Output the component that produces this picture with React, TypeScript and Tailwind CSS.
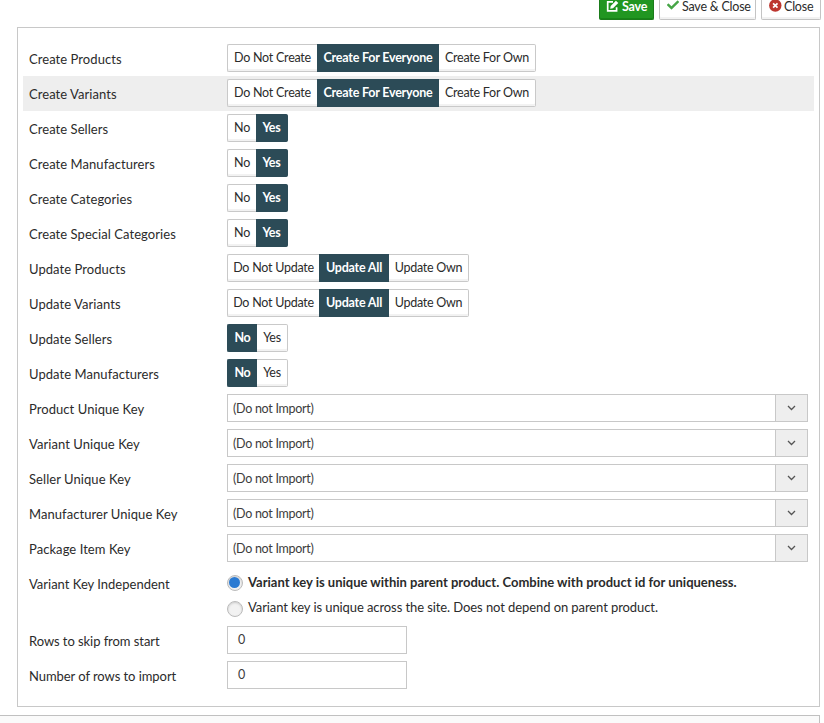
import React from "react";
import { FaCheck } from "react-icons/fa";

type Option = { label: string; width: string };

const createOptions: Option[] = [
  { label: "Do Not Create", width: "w-[90px]" },
  { label: "Create For Everyone", width: "w-[122px]" },
  { label: "Create For Own", width: "w-[97px]" },
];
const updateOptions: Option[] = [
  { label: "Do Not Update", width: "w-[92px]" },
  { label: "Update All", width: "w-[70px]" },
  { label: "Update Own", width: "w-[80px]" },
];
const yesActive: Option[] = [
  { label: "No", width: "w-[29px]" },
  { label: "Yes", width: "w-[32px]" },
];
const noActive: Option[] = [
  { label: "No", width: "w-[30px]" },
  { label: "Yes", width: "w-[31px]" },
];

const toggles = [
  { label: "Create Products", options: createOptions, active: 1 },
  { label: "Create Variants", options: createOptions, active: 1, hover: true },
  { label: "Create Sellers", options: yesActive, active: 1 },
  { label: "Create Manufacturers", options: yesActive, active: 1 },
  { label: "Create Categories", options: yesActive, active: 1 },
  { label: "Create Special Categories", options: yesActive, active: 1 },
  { label: "Update Products", options: updateOptions, active: 1 },
  { label: "Update Variants", options: updateOptions, active: 1 },
  { label: "Update Sellers", options: noActive, active: 0 },
  { label: "Update Manufacturers", options: noActive, active: 0 },
];

const keys = [
  "Product Unique Key",
  "Variant Unique Key",
  "Seller Unique Key",
  "Manufacturer Unique Key",
  "Package Item Key",
];

function Row({
  label,
  hover,
  tracking = "tracking-[0.06px]",
  children,
}: {
  label: string;
  hover?: boolean;
  tracking?: string;
  children: React.ReactNode;
}) {
  return (
    <div className={`flex h-[35px] items-start pt-[3px] pl-[6px] ${hover ? "bg-[#eeeeee]" : ""}`}>
      <div className={`w-[198px] shrink-0 pt-[5px] leading-[20px] ${tracking}`}>{label}</div>
      {children}
    </div>
  );
}

function Segmented({ options, active }: { options: Option[]; active: number }) {
  return (
    <div className="flex h-7 text-[12.5px] leading-[26px]">
      {options.map((o, i) => {
        const first = i === 0 ? "rounded-l-[2px] border-l" : "";
        const last = i === options.length - 1 ? "rounded-r-[2px] border-r" : "";
        const tone =
          i === active
            ? "border-[#2c4b57] bg-[#2c4b57] font-bold tracking-[-0.22px] text-white"
            : "border-[#c9c9c9] bg-white tracking-[-0.25px] shadow-[inset_0_-2px_0_#f2f2f2]";
        return (
          <button
            key={o.label}
            className={`flex h-7 justify-center border-y whitespace-nowrap ${o.width} ${first} ${last} ${tone}`}
          >
            {o.label}
          </button>
        );
      })}
    </div>
  );
}

function Select() {
  return (
    <div className="flex h-7 w-[581px] border border-[#c8c8c8] bg-white text-[12.5px] tracking-[-0.28px] text-[#3c3c3c]">
      <div className="flex-1 pl-[5px] leading-[27px]">(Do not Import)</div>
      <div className="flex w-8 items-center justify-center border-l border-[#c8c8c8] bg-[#eeeeee]">
        <svg width="10" height="6" viewBox="0 0 10 6" fill="none" stroke="#555" strokeWidth="1.3">
          <path d="M1 1 L4.5 4.5 L8 1" />
        </svg>
      </div>
    </div>
  );
}

function Radio({ checked }: { checked?: boolean }) {
  return (
    <span className="flex size-4 shrink-0 items-center justify-center rounded-full border border-[#bbb] bg-[#f2f2f2] shadow-[inset_0_1px_2px_#ccc]">
      {checked && <span className="mr-px mb-px size-[11px] rounded-full bg-[#2a7ad2]" />}
    </span>
  );
}

function NumberBox() {
  return (
    <div className="h-7 w-[180px] border border-[#c8c8c8] bg-white pl-[10px] text-[12.5px] leading-[26px] text-[#3c3c3c]">0</div>
  );
}

export default function App() {
  return (
    <div className="h-[723px] w-[824px] overflow-hidden bg-white font-[Lato,sans-serif] text-[13px] text-[#2b2b2b]">
      <div className="flex h-[27px] items-start justify-end gap-[5px] pr-[3px] text-[12.5px] leading-[14px] tracking-[-0.22px]">
        <button className="flex h-5 w-[55px] items-start rounded-b-[2px] border border-t-0 border-[#1b7c1b] bg-[#219621] pl-[6px] font-bold text-white shadow-[inset_0_-1px_0_#178417]">
          <svg className="mr-[3px] h-[13px] w-[13px]" viewBox="0 0 13 13" fill="none" stroke="white" strokeWidth="1.7">
            <path d="M7 1.8 H1.7 V10.9 H10.6 V7.3" />
            <path d="M4.2 8.8 L4.7 6.1 L9.9 0.8 L12.3 3.1 L7 8.3 Z" fill="white" stroke="none" />
          </svg>
          Save
        </button>
        <button className="flex h-5 w-[97px] items-start rounded-b-[2px] border border-t-0 border-[#c4c4c4] pl-[7px] whitespace-nowrap shadow-[inset_0_-2px_0_#f2f2f2]">
          <FaCheck className="mt-[-1px] mr-[3px] size-3 shrink-0 text-[#46a546]" />
          Save &amp; Close
        </button>
        <button className="flex h-5 w-[60px] items-start rounded-b-[2px] border border-t-0 border-[#c4c4c4] pl-[7px] shadow-[inset_0_-2px_0_#f2f2f2]">
          <svg className="mr-[2px] size-[13px] shrink-0" viewBox="0 0 13 13">
            <circle cx="6.3" cy="5.5" r="6.2" fill="#bd362f" />
            <path d="M4.1 3.3 L8.5 7.7 M8.5 3.3 L4.1 7.7" stroke="white" strokeWidth="1.7" />
          </svg>
          Close
        </button>
      </div>

      <div className="ml-[17px] h-[680px] w-[803px] border border-[#c8c8c8] px-[5px] pt-[13px]">
        {toggles.map((t) => (
          <Row key={t.label} label={t.label} hover={t.hover}>
            <Segmented options={t.options} active={t.active} />
          </Row>
        ))}
        {keys.map((k) => (
          <Row key={k} label={k}>
            <Select />
          </Row>
        ))}
        <div className="flex h-[57px] pt-[3px] pl-[6px]">
          <div className="w-[198px] shrink-0 pt-[5px] leading-[20px]">Variant Key Independent</div>
          <div className="flex flex-col pt-[6px] leading-[16px]">
            <div className="flex h-[26px] gap-[5px] font-bold">
              <Radio checked />
              <span className="-mt-px">Variant key is unique within parent product. Combine with product id for uniqueness.</span>
            </div>
            <div className="flex gap-[5px]">
              <Radio />
              <span className="-mt-0.5 tracking-[-0.085px]">Variant key is unique across the site. Does not depend on parent product.</span>
            </div>
          </div>
        </div>
        <Row label="Rows to skip from start" tracking="tracking-[-0.06px]">
          <NumberBox />
        </Row>
        <Row label="Number of rows to import" tracking="tracking-[-0.06px]">
          <NumberBox />
        </Row>
      </div>

      <div className="mt-2 h-4 w-[820px] border-t border-r border-[#c0c0c0] bg-[#fafafa]" />
    </div>
  );
}
